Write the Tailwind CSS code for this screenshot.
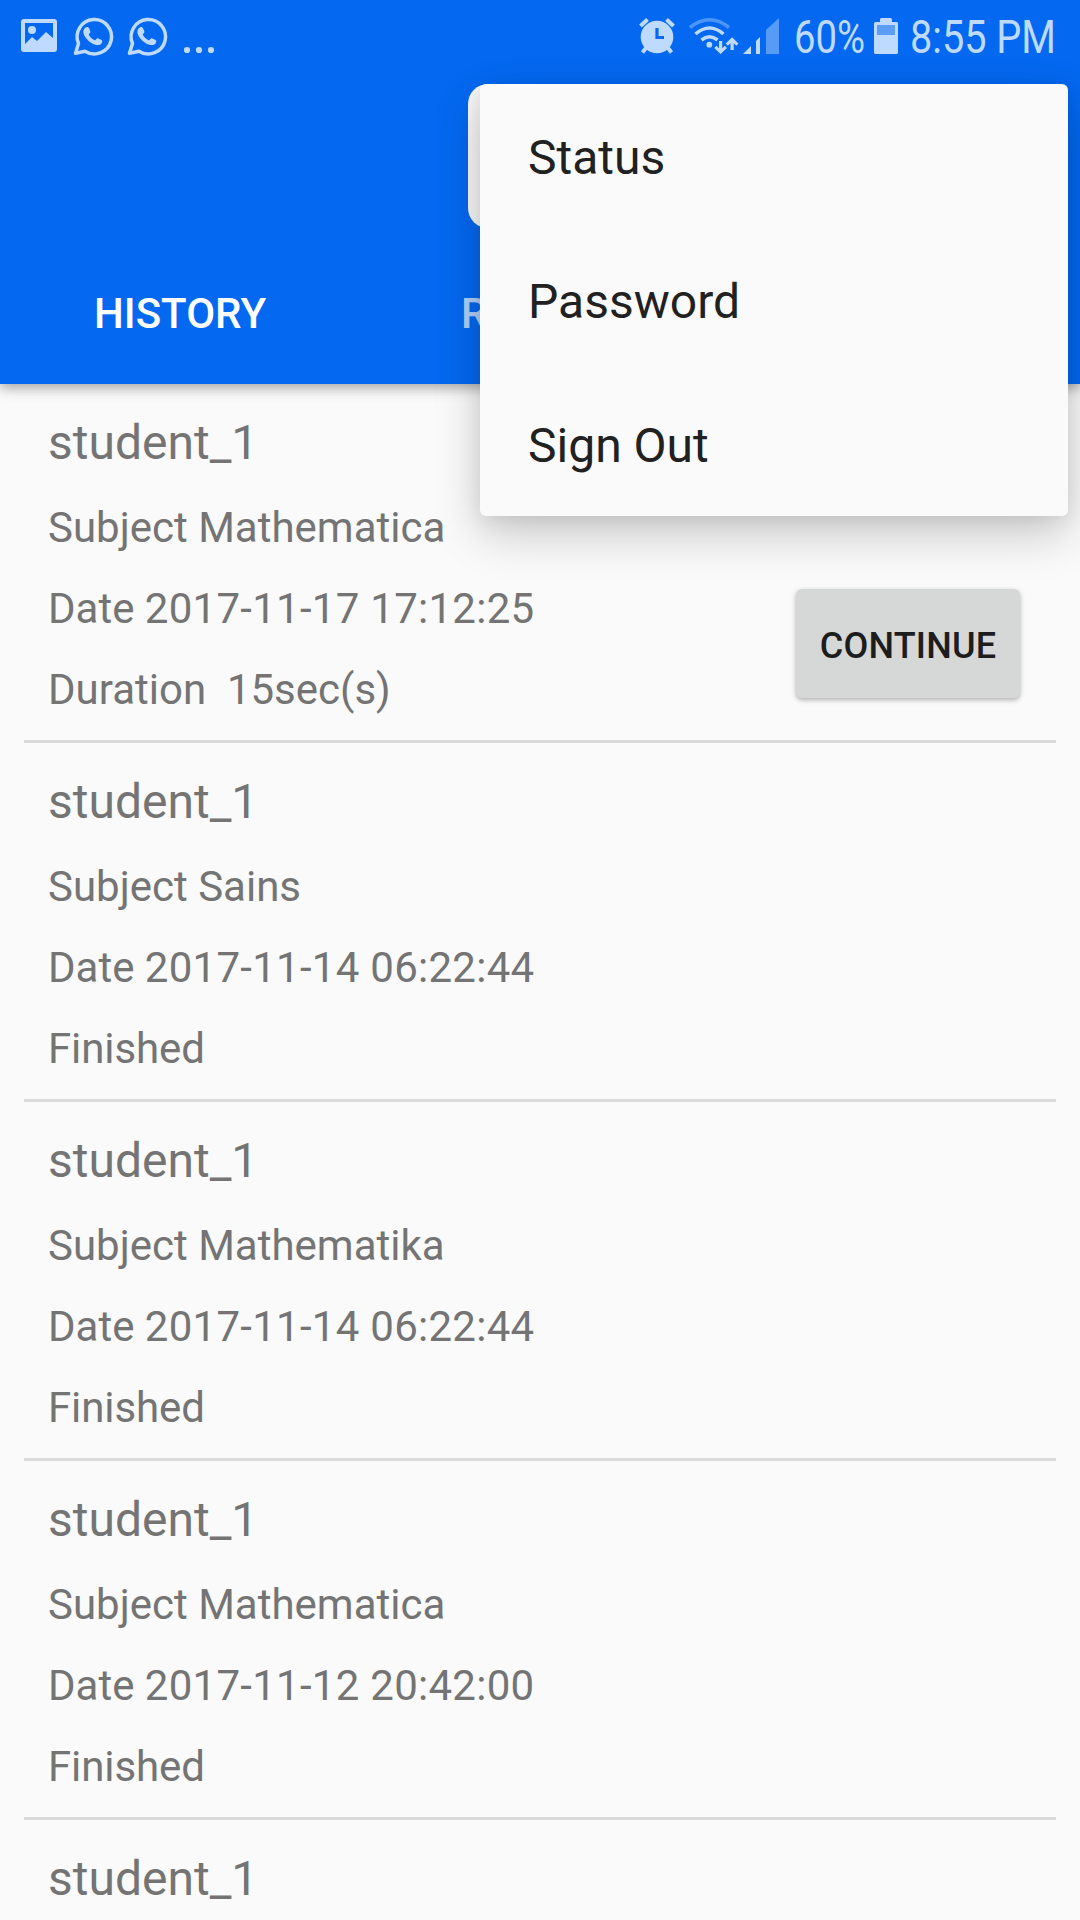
<!DOCTYPE html>
<html lang="en">

<head>
  <meta charset="UTF-8">
  <meta name="viewport" content="width=device-width, initial-scale=1.0">
  <title>History</title>
  <script src="https://cdn.jsdelivr.net/npm/@tailwindcss/browser@4"></script>
</head>

<body class="bg-[#fafafa] font-['Roboto',sans-serif]">
  <div class="relative w-[1080px] h-[1920px] overflow-hidden">
    <header class="relative h-96 bg-[#0468f0] shadow-[0_4px_12px_rgba(0,0,0,0.34)]">
      <!-- status bar -->
      <div class="flex justify-between h-[72px] text-[#bfdaff]">
        <div class="flex">
          <svg width="240" height="72" viewBox="0 0 240 72" fill="currentColor">
            <path fill-rule="evenodd" d="M24 19h30q3 0 3 3v27q0 3-3 3H24q-3 0-3-3V22q0-3 3-3zM25 23v21l7-7 5 4 9-9 7 6V23z" />
            <circle cx="32" cy="30" r="4" />
            <g id="chat">
              <path d="M75.500 53.300l3-9.800A17.200 17.200 0 1 1 85 51.200z" fill="none" stroke="currentColor" stroke-width="3.500" stroke-linejoin="round" />
              <path d="M85 28c2-1.800 3.600-1 4.200.6l1.200 3c.3 1.200-1.600 2.500-1.600 3.200 1.200 2.500 3.400 4.500 6 5.400 1 .1 2-2.400 3-2l3.800 1.900c1.300.7.700 3-.9 4.200-2.400 1.600-6 .7-9.300-1.300-3.900-2.500-7-6.300-7.900-9.800-.5-2.200.2-4.200 1.500-5.200z" />
            </g>
            <use href="#chat" x="54" />
            <circle cx="187" cy="50" r="3.100" />
            <circle cx="199" cy="50" r="3.100" />
            <circle cx="211" cy="50" r="3.100" />
          </svg>
        </div>
        <div class="flex">
          <svg width="460" height="72" viewBox="620 0 460 72" fill="currentColor">
            <!-- alarm -->
            <circle cx="657" cy="37" r="16.300" />
            <path d="M640.500 26l7-6.500M673.500 26l-7-6.500M646 48l-3.500 4.500M668 48l3.500 4.500" fill="none" stroke="currentColor" stroke-width="4" />
            <path d="M657 28v9.500h7" fill="none" stroke="#0468f0" stroke-width="3.200" />
            <!-- wifi -->
            <g fill="none" stroke="currentColor" stroke-width="3.600">
              <path d="M690 27.500q19.500-15.500 39 0" opacity=".4" />
              <path d="M695.500 34q14-12 28 0M701.500 40q8-6.500 16 0" />
            </g>
            <circle cx="709.300" cy="44.700" r="2.900" />
            <path d="M719 41h3.200v7.200l2.600-2.500 2.200 2.200-6.400 6.200-6.400-6.200 2.200-2.200 2.600 2.500zM730.500 50h3.200v-6.800l2.600 2.500 2.200-2.200-6.400-6.200-6.400 6.200 2.200 2.200 2.600-2.500z" />
            <!-- signal -->
            <path d="M743 54l8-8v8zM756 54V41l4-4v17z" />
            <path d="M766 54V30l13-12v36z" opacity=".45" />
            <text x="794" y="53.300" font-size="45.500" textLength="71" lengthAdjust="spacingAndGlyphs">60%</text>
            <!-- battery -->
            <path d="M875.500 22h4.500v-2.500q0-1.500 1.500-1.500h9q1.500 0 1.500 1.500V22h4.500q1.500 0 1.500 1.500v29q0 1.500-1.500 1.500h-21q-1.500 0-1.500-1.500v-29q0-1.500 1.500-1.500z" />
            <path d="M877 25h18v10h-18z" fill="#5e9df5" />
            <text x="910" y="53.300" font-size="45.500" textLength="146" lengthAdjust="spacingAndGlyphs">8:55 PM</text>
          </svg>
        </div>
      </div>
      <!-- toolbar -->
      <div class="flex h-[168px] pt-3 pl-[468px]">
        <div class="w-[588px] h-[144px] rounded-[20px] bg-[#f8f8f8]"></div>
      </div>
      <!-- tabs -->
      <nav class="flex h-36 text-[42px] leading-[56px] font-medium text-white">
        <a class="w-[360px] pt-[46px] pl-[94px]">HISTORY</a>
        <a class="w-[360px] pt-[46px] pl-[101px] text-white/70">R</a>
      </nav>
    </header>

    <main class="px-6 text-[42px] leading-[56px] text-[#747474]">
      <section class="flex flex-col gap-[25px] h-[359px] px-6 pt-[27px] border-b-3 border-[#dadada]">
        <h2 class="text-[48px] leading-[64px]">student_1</h2>
        <div class="flex justify-between">
          <div class="flex flex-col gap-[25px]">
            <p>Subject Mathematica</p>
            <p>Date <span class="tracking-[0.27px]">2017-11-17 17:12:25</span></p>
            <p class="whitespace-pre">Duration  15sec(s)</p>
          </div>
          <button class="w-[224px] h-[109px] mt-[89px] mr-3 pt-1 rounded-md bg-[#d6d7d7] text-[#1d1d1d] text-[36px] font-medium tracking-[0.2px] shadow-[0_2px_5px_rgba(0,0,0,0.3)]">CONTINUE</button>
        </div>
      </section>
      <section class="flex flex-col gap-[25px] h-[359px] px-6 pt-[27px] border-b-3 border-[#dadada]">
        <h2 class="text-[48px] leading-[64px]">student_1</h2>
        <p>Subject Sains</p>
        <p>Date <span class="tracking-[0.27px]">2017-11-14 06:22:44</span></p>
        <p class="tracking-[-0.1px]">Finished</p>
      </section>
      <section class="flex flex-col gap-[25px] h-[359px] px-6 pt-[27px] border-b-3 border-[#dadada]">
        <h2 class="text-[48px] leading-[64px]">student_1</h2>
        <p>Subject Mathematika</p>
        <p>Date <span class="tracking-[0.27px]">2017-11-14 06:22:44</span></p>
        <p class="tracking-[-0.1px]">Finished</p>
      </section>
      <section class="flex flex-col gap-[25px] h-[359px] px-6 pt-[27px] border-b-3 border-[#dadada]">
        <h2 class="text-[48px] leading-[64px]">student_1</h2>
        <p>Subject Mathematica</p>
        <p>Date <span class="tracking-[0.27px]">2017-11-12 20:42:00</span></p>
        <p class="tracking-[-0.1px]">Finished</p>
      </section>
      <section class="px-6 pt-[27px]">
        <h2 class="text-[48px] leading-[64px]">student_1</h2>
      </section>
    </main>

    <!-- overflow menu -->
    <ul class="absolute top-[84px] left-[480px] w-[588px] rounded-md bg-[#fafafa] text-[48px] leading-[148px] text-[#212121] shadow-[0_18px_48px_rgba(0,0,0,0.2),0_4px_20px_rgba(0,0,0,0.08)]">
      <li class="h-36 px-12">Status</li>
      <li class="h-36 px-12">Password</li>
      <li class="h-36 px-12">Sign Out</li>
    </ul>
  </div>
</body>

</html>
